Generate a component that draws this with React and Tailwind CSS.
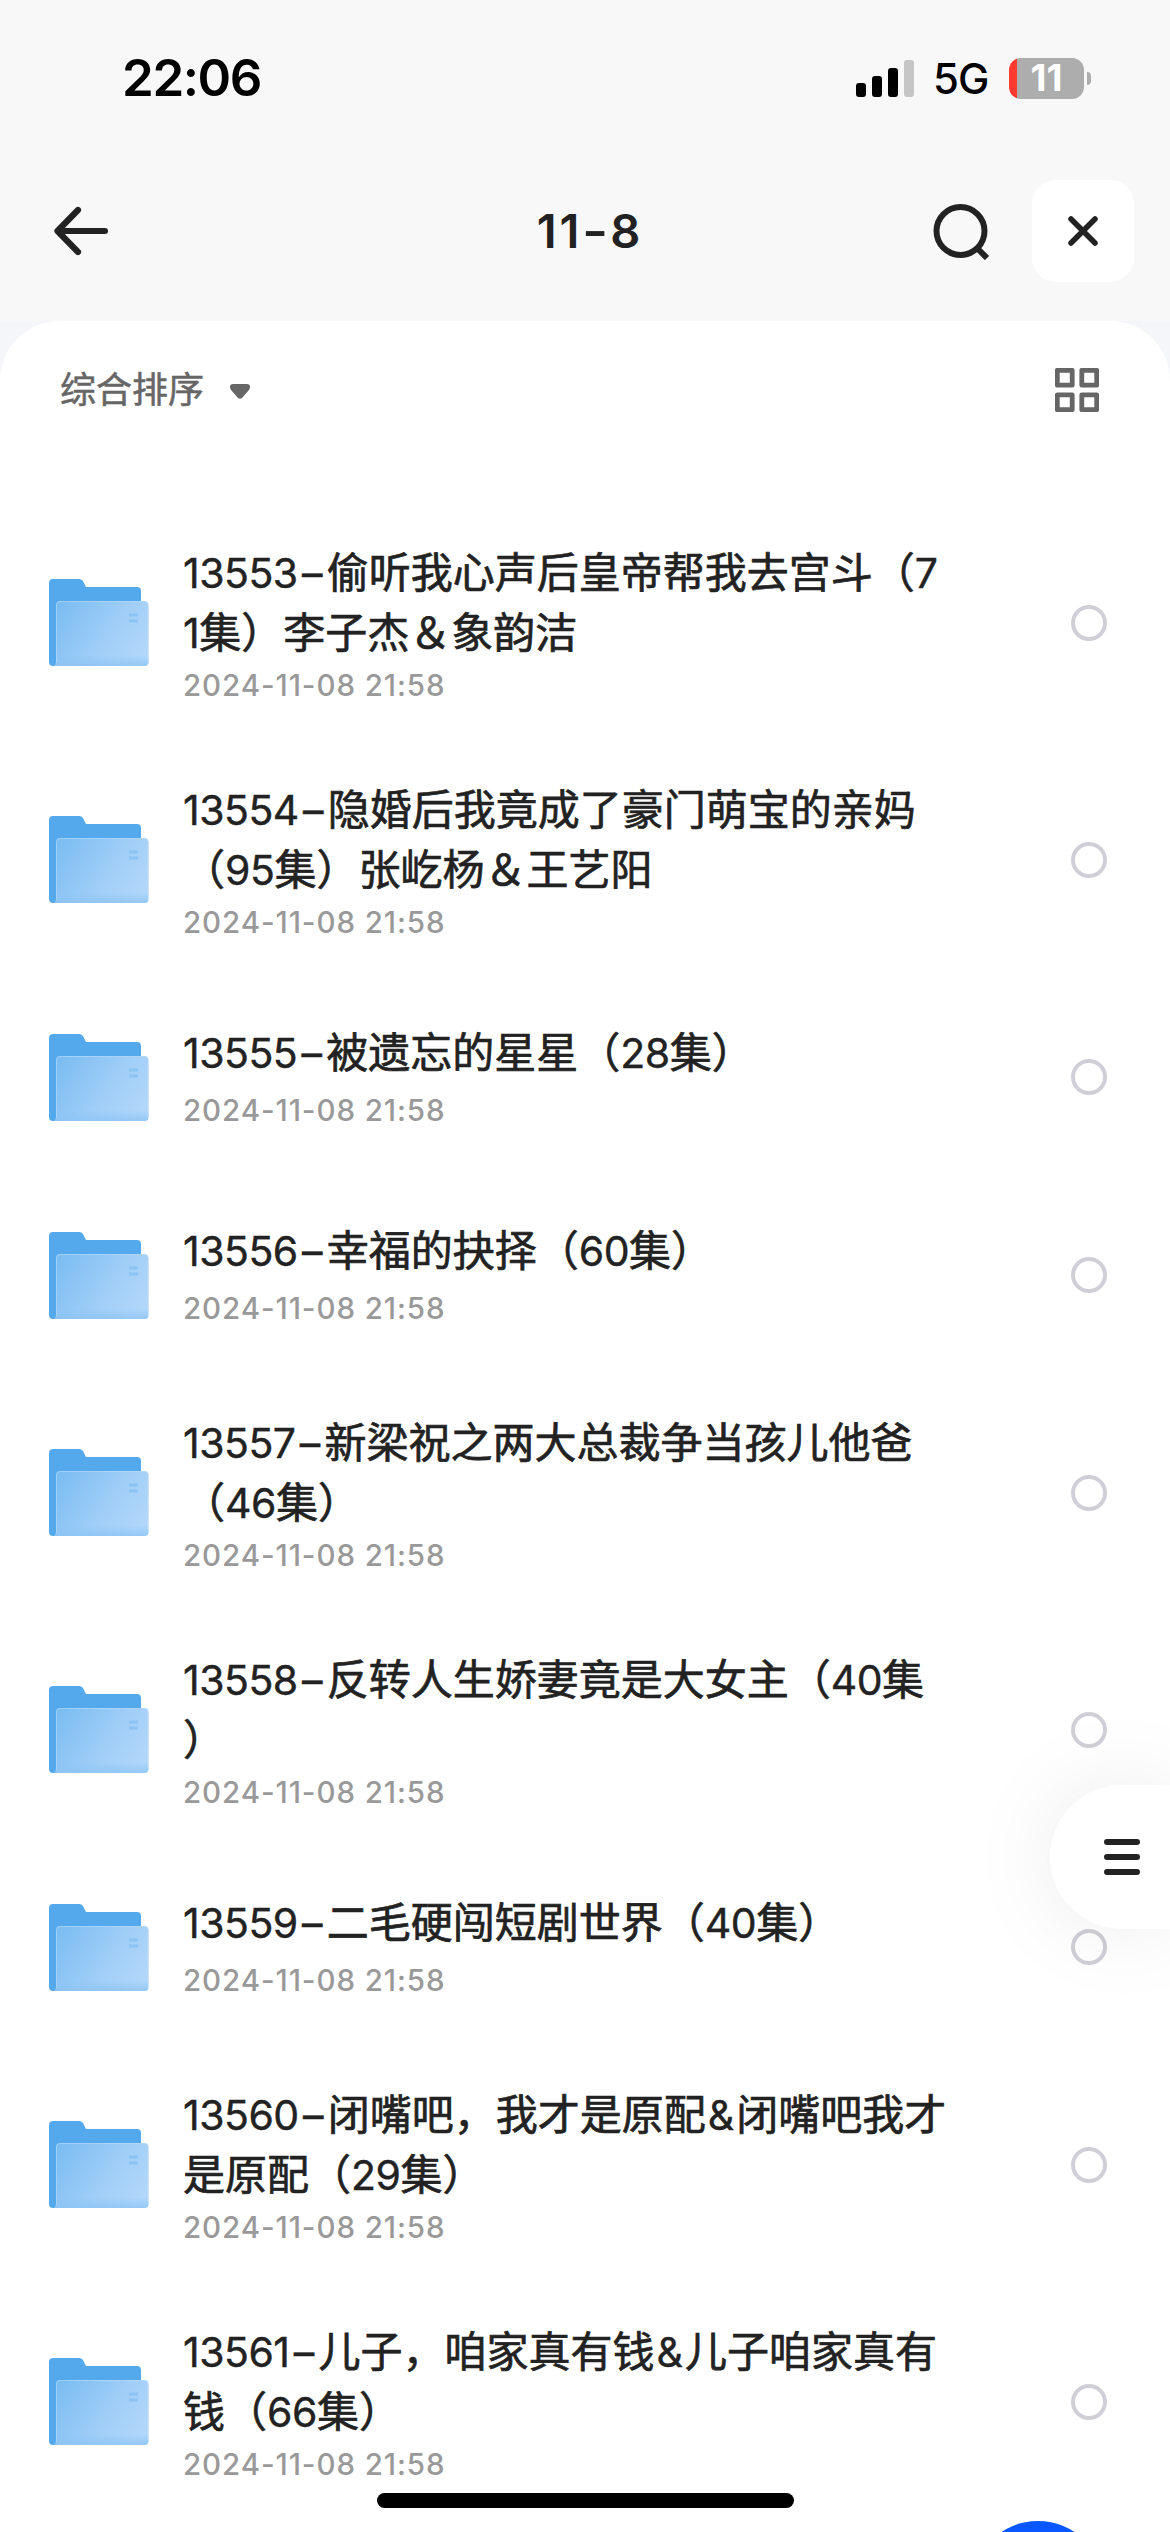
import React from "react";

const FILES = [
  ["13553–偷听我心声后皇帝帮我去宫斗（7", "1集）李子杰＆象韵洁"],
  ["13554–隐婚后我竟成了豪门萌宝的亲妈", "（95集）张屹杨＆王艺阳"],
  ["13555–被遗忘的星星（28集）"],
  ["13556–幸福的抉择（60集）"],
  ["13557–新梁祝之两大总裁争当孩儿他爸", "（46集）"],
  ["13558–反转人生娇妻竟是大女主（40集", "）"],
  ["13559–二毛硬闯短剧世界（40集）"],
  ["13560–闭嘴吧，我才是原配&闭嘴吧我才", "是原配（29集）"],
  ["13561–儿子，咱家真有钱&儿子咱家真有", "钱（66集）"],
];

function FolderIcon() {
  return (
    <svg className="h-[87px] w-[100px] shrink-0" viewBox="0 0 100 87" fill="none">
      <defs>
        <linearGradient id="front" x1="8" y1="24" x2="92" y2="80" gradientUnits="userSpaceOnUse">
          <stop offset="0" stopColor="#79bcf2" />
          <stop offset="0.6" stopColor="#a0cef7" />
          <stop offset="1" stopColor="#b2d7fa" />
        </linearGradient>
        <linearGradient id="base" x1="0" y1="76" x2="0" y2="87" gradientUnits="userSpaceOnUse">
          <stop offset="0" stopColor="#8cc4f5" stopOpacity="0" />
          <stop offset="1" stopColor="#8cc4f5" stopOpacity="0.8" />
        </linearGradient>
      </defs>
      <path d="M0 4Q0 0 4 0H30Q33 0 34.500 3L37 8H88Q92 8 92 12V60L8 87H4Q0 87 0 83Z" fill="#54a9ed" />
      <path d="M7 26Q7 22 11 22H95Q99.500 22 99.500 26V83Q99.500 87 95.500 87H5Q7 86 7 82Z" fill="url(#front)" />
      <path d="M7 26V72H99.500V83Q99.500 87 95.500 87H5Q7 86 7 82Z" fill="url(#base)" />
      <path d="M7.500 84V26Q7.500 22.500 11 22.500H95Q99 22.500 99 26V84" stroke="#b9dcfa" strokeOpacity="0.6" />
      <path d="M80 36H89M80 42H89" stroke="#8bc3f4" strokeWidth="3" />
    </svg>
  );
}

function TitleLine({ text }) {
  return (
    <span className="block h-[60px] whitespace-nowrap leading-[60px]">
      {text.split(/([0-9]+|&|–)/).map((part, i) => {
        if (part === "–") return <span key={i} className="inline-block w-[29px] text-center text-[41px] leading-[50px] [-webkit-text-stroke:0.4px_#222]">–</span>;
        if (part === "&") return <span key={i} className="mx-[2px] text-[41px] [-webkit-text-stroke:0.4px_#222]">&amp;</span>;
        return i % 2 ? (
          <span key={i} className="text-[41px] tracking-[-0.5px] [-webkit-text-stroke:0.4px_#222]">{part}</span>
        ) : (
          <span key={i} className="font-['Noto_Sans_CJK_SC',sans-serif] [-webkit-text-stroke:0.7px_#222]">{part}</span>
        );
      })}
    </span>
  );
}

function FileRow({ lines }) {
  const double = lines.length > 1;
  return (
    <li className={"flex shrink-0 items-center pl-[49px] pr-[63px] " + (double ? "h-[237px]" : "h-[198px]")}>
      <FolderIcon />
      <div className={"ml-[34px] flex flex-1 flex-col " + (double ? "-mt-[4px] gap-[8px]" : "-mt-[7px] gap-[13px]")}>
        <p className="text-[42px] text-[#222222]">
          {lines.map((line) => <TitleLine key={line} text={line} />)}
        </p>
        <time className="block h-[34px] text-[29.500px] font-medium leading-[34px] tracking-[0.92px] text-[#999999]">2024-11-08 21:58</time>
      </div>
      <span className="size-9 shrink-0 rounded-full border-[4px] border-[#d0cfd7]" />
    </li>
  );
}

function StatusBar() {
  return (
    <div className="flex h-[156px] items-center pl-[122px] pr-[79px]">
      <span className="text-[51px] font-semibold leading-[60px] tracking-[-1.4px]">22:06</span>
      <svg className="ml-auto h-[37px] w-[58px]" viewBox="0 0 58 37">
        <rect x="0" y="23" width="10" height="14" rx="3" />
        <rect x="16" y="16" width="10" height="21" rx="3" />
        <rect x="32" y="8" width="10" height="29" rx="3" />
        <rect x="48" y="0" width="10" height="37" rx="3" fill="#c6c6c6" />
      </svg>
      <span className="ml-[19px] w-[55px] pt-[2px] text-[42px] font-medium leading-[60px] tracking-[-1px]">5G</span>
      <div className="ml-[21px] flex h-[41px] w-[75px] items-center justify-center rounded-[12px] bg-[linear-gradient(to_right,#ff3b30_8px,#adadad_8px)]">
        <span className="text-[37px] font-bold leading-[48px] text-white">11</span>
      </div>
      <span className="ml-[3px] h-[13px] w-[4px] rounded-r-full bg-[#adadad]" />
    </div>
  );
}

export default function App() {
  return (
    <div className="relative flex h-[2532px] w-[1170px] flex-col overflow-hidden bg-[#f8f8f8] font-['Inter','Noto_Sans_CJK_SC',sans-serif] text-black">
      <StatusBar />
      <header className="grid h-[165px] shrink-0 grid-cols-[1fr_auto_1fr] items-start px-9 pt-6">
        <button className="flex h-[102px] items-center pl-[18px]">
          <svg className="h-[54px] w-[54px]" viewBox="0 0 54 54" fill="none" stroke="#222" strokeWidth="6.200" strokeLinecap="round" strokeLinejoin="round">
            <path d="M24 6L3.500 27L24 48M4 27H51" />
          </svg>
        </button>
        <h1 className="flex h-[102px] items-center pl-[10px] text-[47px] font-semibold tracking-[3px] text-[#222222]">
          <span>11<span className="mr-[3px] inline-block origin-left scale-x-[1.2]">-</span>8</span>
        </h1>
        <div className="flex items-center justify-end gap-[42px]">
          <svg className="h-[57px] w-[57px]" viewBox="0 0 57 57" fill="none" stroke="#222" strokeWidth="6">
            <circle cx="27.500" cy="28" r="24" />
            <path d="M44.500 45.500L54 55" />
          </svg>
          <button className="flex size-[102px] items-center justify-center rounded-[24px] bg-white">
            <svg className="size-[30px]" viewBox="0 0 30 30" fill="none" stroke="#222" strokeWidth="5.500" strokeLinecap="round">
              <path d="M3 3L27 27M27 3L3 27" />
            </svg>
          </button>
        </div>
      </header>
      <div className="flex flex-1 flex-col bg-[#f4f6f9]">
        <main className="flex-1 rounded-t-[60px] bg-white">
          <div className="flex h-[138px] items-center justify-between pl-[60px] pr-[71px]">
            <button className="flex items-center gap-[26px] text-[36px] leading-[54px] text-[#666666] [-webkit-text-stroke:0.5px_#666]">
              综合排序
              <svg className="mt-[2px] h-[15px] w-[20px]" viewBox="0 0 20 15" fill="#666">
                <path d="M3 0H17Q20 0 20 3Q20 5 18.500 6.500L12.500 13.500Q10 16 7.500 13.500L1.500 6.500Q0 5 0 3Q0 0 3 0Z" />
              </svg>
            </button>
            <svg className="size-[44px]" viewBox="0 0 44 44" fill="none" stroke="#666" strokeWidth="4.800" strokeLinejoin="round">
              <path d="M2.300 2.300H17.200V17.200H2.300ZM26.800 2.300H41.700V17.200H26.800ZM2.300 26.800H17.200V41.700H2.300ZM26.800 26.800H41.700V41.700H26.800Z" />
            </svg>
          </div>
          <ul className="flex flex-col pt-[45px]">
            {FILES.map((lines) => <FileRow key={lines[0]} lines={lines} />)}
          </ul>
        </main>
      </div>
      <button className="absolute right-0 top-[1785px] flex h-[144px] w-[120px] items-center rounded-l-full bg-white pl-[54px] shadow-[0_0_90px_rgba(0,0,0,0.08)]">
        <svg className="size-9" viewBox="0 0 36 36" stroke="#222" strokeWidth="6" strokeLinecap="round">
          <path d="M3 3H33M3 18H33M3 33H33" />
        </svg>
      </button>
      <span className="absolute left-[972px] top-[2521px] size-[132px] rounded-full bg-[#0b57ff]" />
      <span className="absolute left-[377px] top-[2493px] h-[15px] w-[417px] rounded-full bg-black" />
    </div>
  );
}
